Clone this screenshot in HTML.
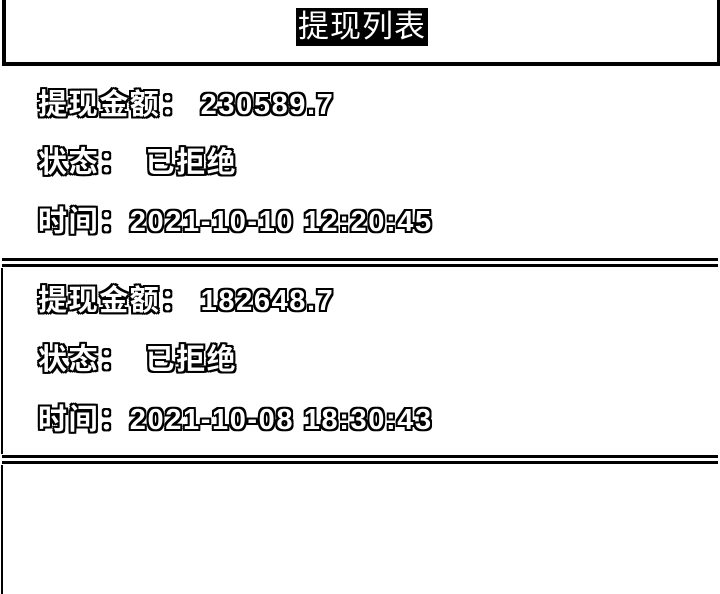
<!DOCTYPE html>
<html><head><meta charset="utf-8"><style>
html,body{margin:0;padding:0;background:#fff;width:720px;height:594px;overflow:hidden;position:relative;font-family:"Liberation Sans","Noto Sans CJK SC",sans-serif;}
.hdr{position:absolute;left:2px;top:-4px;width:711px;height:66px;border:4px solid #000;border-top:none;}
.title{position:absolute;left:296px;top:8px;font-size:31px;color:#fff;background:#000;padding:0 2px;line-height:38px;letter-spacing:1px;}
.t{position:absolute;left:38px;font-size:29px;font-weight:bold;color:#fff;line-height:34px;white-space:pre;letter-spacing:1.6px;
text-shadow:-2px 0 #000,2px 0 #000,0 -2px #000,0 2px #000,-2px -2px #000,2px 2px #000,-2px 2px #000,2px -2px #000,-1px 0 #000,1px 0 #000;}
.ln{position:absolute;left:2px;width:716px;height:3px;background:#000;}
.vl{position:absolute;left:1px;width:2px;background:#000;}
.g{display:inline-block;width:6px;}
</style></head><body>
<div class="hdr"></div>
<div class="title">提现列表</div>
<div class="t" style="top:88px">提现金额： 230589.7</div>
<div class="t" style="top:146px">状态： <span class="g"></span>已拒绝</div>
<div class="t" style="top:205px">时间：2021-10-10 12:20:45</div>
<div class="ln" style="top:258px"></div>
<div class="ln" style="top:264px"></div>
<div class="vl" style="top:268px;height:186px"></div>
<div class="t" style="top:284px">提现金额： 182648.7</div>
<div class="t" style="top:343px">状态： <span class="g"></span>已拒绝</div>
<div class="t" style="top:403px">时间：2021-10-08 18:30:43</div>
<div class="ln" style="top:455px"></div>
<div class="ln" style="top:461px"></div>
<div class="vl" style="top:465px;height:129px"></div>
</body></html>
